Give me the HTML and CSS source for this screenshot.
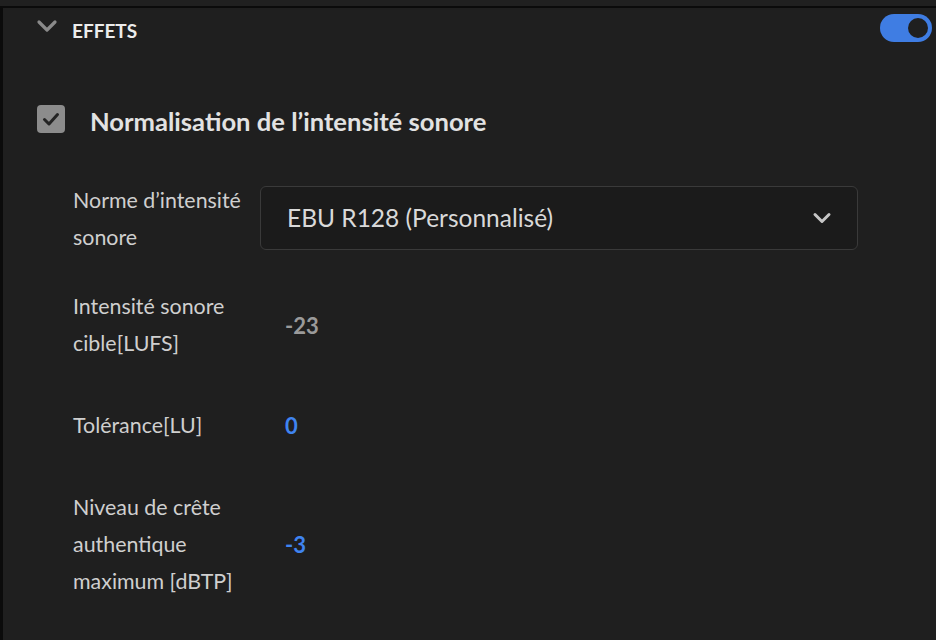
FILE: index.html
```html
<!DOCTYPE html>
<html lang="fr">
<head>
<meta charset="utf-8">
<link rel="stylesheet" href="styles.css">
</head>
<body>
<div class="topbar"></div>
<section class="panel">
  <header class="panel-header">
    <svg class="chev" width="22" height="14" viewBox="0 0 22 14"><path d="M3 3 L11 11 L19 3" fill="none" stroke="#8a8a8a" stroke-width="3.2" stroke-linecap="round" stroke-linejoin="round"/></svg>
    <h2 class="panel-title">EFFETS</h2>
    <div class="toggle"><span class="knob"></span></div>
  </header>

  <div class="effect-head">
    <span class="checkbox">
      <svg width="28" height="28" viewBox="0 0 28 28"><path d="M7.5 14.5 L12 19 L20.5 9.5" fill="none" stroke="#242424" stroke-width="3" stroke-linecap="round" stroke-linejoin="round"/></svg>
    </span>
    <h3 class="effect-title">Normalisation de l’intensité sonore</h3>
  </div>

  <div class="form">
    <div class="label">Norme d’intensité<br>sonore</div>
    <div class="field">
      <div class="select">
        <span>EBU R128 (Personnalisé)</span>
        <svg width="22" height="14" viewBox="0 0 22 14"><path d="M4 3.5 L11 10.5 L18 3.5" fill="none" stroke="#c6c6c6" stroke-width="3" stroke-linecap="round" stroke-linejoin="round"/></svg>
      </div>
    </div>

    <div class="label">Intensité sonore<br>cible[LUFS]</div>
    <div class="field"><span class="value muted">-23</span></div>

    <div class="label">Tolérance[LU]</div>
    <div class="field"><span class="value accent">0</span></div>

    <div class="label">Niveau de crête<br>authentique<br>maximum [dBTP]</div>
    <div class="field"><span class="value accent">-3</span></div>
  </div>
</section>
</body>
</html>
```

FILE: styles.css
```css
* { box-sizing: border-box; }
html, body { margin: 0; padding: 0; }
body {
  width: 936px;
  height: 640px;
  overflow: hidden;
  background: #1f1f1f;
  font-family: Lato, "Liberation Sans", sans-serif;
  color: #d6d6d6;
}
.topbar {
  height: 8px;
  background: #202020;
  border-bottom: 2px solid #0b0b0b;
}
.panel {
  border-left: 3px solid #0b0b0b;
  height: 632px;
  background: #1f1f1f;
}
.panel-header {
  display: flex;
  align-items: center;
  height: 44px;
  padding: 0 4px 0 33px;
}
.chev { display: block; margin-top: -9px; }
.panel-title {
  margin: 0 0 0 14px;
  font-size: 19px;
  font-weight: 700;
  color: #ececec;
  flex: 1;
}
.toggle {
  position: relative;
  width: 52px;
  height: 28px;
  border-radius: 14px;
  background: #3f7de3;
  margin-top: -4px;
}
.knob {
  position: absolute;
  right: 4px;
  top: 4px;
  width: 20px;
  height: 20px;
  border-radius: 50%;
  background: #1f1f1f;
}
.effect-head {
  display: flex;
  align-items: center;
  gap: 25px;
  padding: 52px 0 0 34px;
}
.checkbox {
  width: 28px;
  height: 28px;
  border-radius: 4px;
  background: #8c8c8c;
  display: block;
}
.checkbox svg { display: block; }
.effect-title {
  margin: 0;
  font-size: 25.6px;
  font-weight: 700;
  color: #e2e2e2;
  position: relative;
  top: 2px;
}
.form {
  display: grid;
  grid-template-columns: 187px 598px;
  row-gap: 32px;
  padding: 48px 0 0 70px;
}
.label {
  font-size: 21.4px;
  line-height: 37px;
  color: #cfcfcf;
  min-height: 63px;
  display: flex;
  align-items: center;
}
.field {
  display: flex;
  align-items: center;
}
.select {
  width: 598px;
  height: 64px;
  margin-bottom: 3px;
  border: 1.5px solid #3a3a3a;
  border-radius: 6px;
  background: #1b1b1b;
  display: flex;
  align-items: center;
  justify-content: space-between;
  padding: 0 24px 0 26px;
  font-size: 24.5px;
  color: #d9d9d9;
}
.select svg { display: block; }
.value {
  padding-left: 25px;
  font-size: 22px;
  font-weight: 700;
}
.muted { color: #9a9a9a; }
.accent { color: #3f84f0; }
```
